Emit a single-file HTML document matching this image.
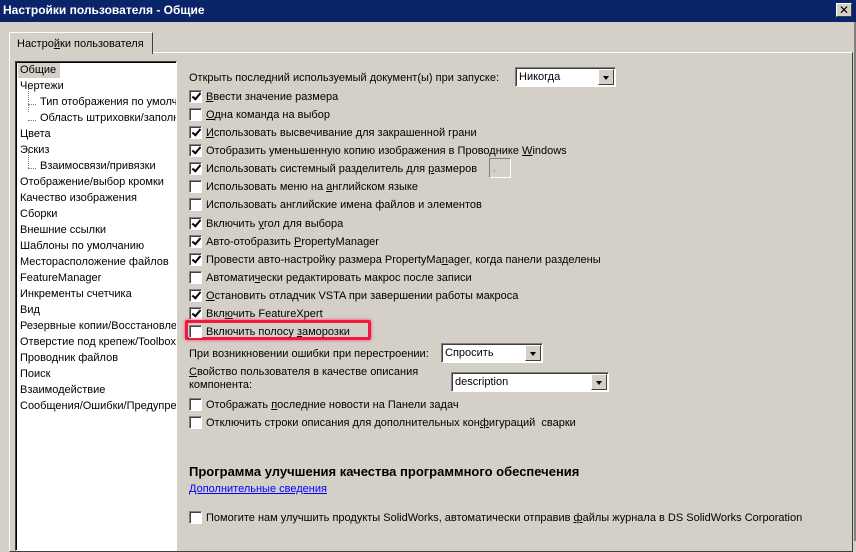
<!DOCTYPE html>
<html><head><meta charset="utf-8"><style>
*{margin:0;padding:0;box-sizing:border-box}
body{width:856px;height:541px;overflow:hidden;background:#d4d0c8;font-family:"Liberation Sans","DejaVu Sans",sans-serif;font-size:11px;color:#000;position:relative}
.a{position:absolute;white-space:nowrap}
.title{left:0;top:0;width:856px;height:22px;background:#0a246a;color:#fff;font-weight:bold;font-size:12px;padding:3px 0 0 3px}
.close{left:836px;top:3px;width:16px;height:14px;background:#d4d0c8;border:1px solid;border-color:#fff #404040 #404040 #fff;color:#000;font-size:12px;font-weight:bold;text-align:center;line-height:12px}
.tab{left:9px;top:32px;width:144px;height:22px;border:1px solid;border-color:#fff #404040 transparent #fff;border-bottom:none;background:#d4d0c8;padding:5px 0 0 7px;z-index:2}
.panel{left:9px;top:52px;width:844px;height:500px;border:1px solid;border-color:#fff #404040 #404040 #fff}
.list{left:15px;top:61px;width:162px;height:490px;background:#fff;border:1px solid;border-color:#404040 #fff #fff #404040;box-shadow:inset 1px 1px 0 #000}
.li{left:20px;margin-top:1px}
.cb{position:absolute;left:189px;width:13px;height:13px;background:#fff;border:1px solid;border-color:#808080 #fff #fff #808080;box-shadow:inset 1px 1px 0 #404040}
.cb.c::after{content:"";position:absolute;left:4px;top:0px;width:3px;height:7px;border:solid #000;border-width:0 2px 2px 0;transform:rotate(40deg)}
.t{left:206px;margin-top:2px}
.m{margin-top:2px}
.combo{position:absolute;background:#fff;border:1px solid;border-color:#808080 #fff #fff #808080;box-shadow:inset 1px 1px 0 #404040;padding:3px 0 0 3px;font-size:11px}
.combo i{position:absolute;right:1px;top:1px;bottom:1px;width:16px;background:#d4d0c8;border:1px solid;border-color:#fff #404040 #404040 #fff}
.combo i::after{content:"";position:absolute;left:4px;top:6px;border:3px solid transparent;border-top:4px solid #000;border-bottom:0}
u{text-decoration:underline}
</style></head><body>
<div class="a title">Настройки пользователя - Общие</div>
<div class="a close">✕</div>
<div class="a panel"></div>
<div class="a tab">Настро<u>й</u>ки пользователя</div>
<div class="a list"></div>
<div class="a" style="left:18px;top:63px;width:42px;height:15px;background:#d4d0c8"></div>
<div class="a li" style="top:63px">Общие</div>
<div class="a li" style="top:79px">Чертежи</div>
<div class="a" style="left:28px;top:88px;height:24px;border-left:1px dotted #808080"></div>
<div class="a" style="left:28px;top:104px;width:8px;border-top:1px dotted #808080"></div>
<div class="a" style="left:28px;top:120px;width:8px;border-top:1px dotted #808080"></div>
<div class="a li" style="left:40px;top:95px;width:136px;overflow:hidden">Тип отображения по умолчанию</div>
<div class="a li" style="left:40px;top:111px;width:136px;overflow:hidden">Область штриховки/заполнения</div>
<div class="a li" style="top:127px">Цвета</div>
<div class="a li" style="top:143px">Эскиз</div>
<div class="a" style="left:28px;top:152px;height:16px;border-left:1px dotted #808080"></div>
<div class="a" style="left:28px;top:168px;width:8px;border-top:1px dotted #808080"></div>
<div class="a li" style="left:40px;top:159px">Взаимосвязи/привязки</div>
<div class="a li" style="top:175px">Отображение/выбор кромки</div>
<div class="a li" style="top:191px">Качество изображения</div>
<div class="a li" style="top:207px">Сборки</div>
<div class="a li" style="top:223px">Внешние ссылки</div>
<div class="a li" style="top:239px">Шаблоны по умолчанию</div>
<div class="a li" style="top:255px">Месторасположение файлов</div>
<div class="a li" style="top:271px">FeatureManager</div>
<div class="a li" style="top:287px">Инкременты счетчика</div>
<div class="a li" style="top:303px">Вид</div>
<div class="a li" style="top:319px;width:156px;overflow:hidden">Резервные копии/Восстановление</div>
<div class="a li" style="top:335px;width:156px;overflow:hidden">Отверстие под крепеж/Toolbox</div>
<div class="a li" style="top:351px">Проводник файлов</div>
<div class="a li" style="top:367px">Поиск</div>
<div class="a li" style="top:383px">Взаимодействие</div>
<div class="a li" style="top:399px;width:156px;overflow:hidden">Сообщения/Ошибки/Предупреждения</div>

<div class="a m" style="left:189px;top:70px">Открыть последний используемый <u>д</u>окумент(ы) при запуске:</div>
<div class="combo" style="left:515px;top:67px;width:101px;height:20px">Никогда<i></i></div>

<div class="cb c" style="top:90px"></div><div class="a t" style="top:89px"><u>В</u>вести значение размера</div>
<div class="cb" style="top:108px"></div><div class="a t" style="top:107px"><u>О</u>дна команда на выбор</div>
<div class="cb c" style="top:126px"></div><div class="a t" style="top:125px"><u>И</u>спользовать высвечивание для закрашенной грани</div>
<div class="cb c" style="top:144px"></div><div class="a t" style="top:143px">Отобразить уменьшенную копию изображения в Проводнике <u>W</u>indows</div>
<div class="cb c" style="top:162px"></div><div class="a t" style="top:161px">Использовать системный разделитель для <u>р</u>азмеров</div>
<div class="a" style="left:489px;top:158px;width:22px;height:20px;border:1px solid;border-color:#808080 #fff #fff #808080;font-size:9px;padding:4px 0 0 3px;color:#808080">,</div>
<div class="cb" style="top:180px"></div><div class="a t" style="top:179px">Использовать меню на <u>а</u>нглийском языке</div>
<div class="cb" style="top:198px"></div><div class="a t" style="top:197px">Использовать английские имена файлов и элементов</div>
<div class="cb c" style="top:217px"></div><div class="a t" style="top:216px">Включить <u>у</u>гол для выбора</div>
<div class="cb c" style="top:235px"></div><div class="a t" style="top:234px">Авто-отобразить <u>P</u>ropertyManager</div>
<div class="cb c" style="top:253px"></div><div class="a t" style="top:252px">Провести авто-настройку размера PropertyMa<u>n</u>ager, когда панели разделены</div>
<div class="cb" style="top:271px"></div><div class="a t" style="top:270px">Автомати<u>ч</u>ески редактировать макрос после записи</div>
<div class="cb c" style="top:289px"></div><div class="a t" style="top:288px"><u>О</u>становить отладчик VSTA при завершении работы макроса</div>
<div class="cb c" style="top:307px"></div><div class="a t" style="top:306px">Вкл<u>ю</u>чить FeatureXpert</div>
<div class="a" style="left:185px;top:320px;width:186px;height:20px;border:3px solid #ee1c3c;border-radius:2px;box-shadow:0 0 3px #f37"></div>
<div class="cb" style="top:325px"></div><div class="a t" style="top:324px">Включить полосу <u>з</u>аморозки</div>
<div class="a m" style="left:189px;top:346px">При возникновении ошибки при перестроении:</div>
<div class="combo" style="left:441px;top:343px;width:102px;height:20px">Спросить<i></i></div>
<div class="a m" style="left:189px;top:364px;line-height:13px"><u>С</u>войство пользователя в качестве описания<br>компонента:</div>
<div class="combo" style="left:451px;top:372px;width:158px;height:20px">description<i></i></div>
<div class="cb" style="top:398px"></div><div class="a t" style="top:397px">Отображать <u>п</u>оследние новости на Панели задач</div>
<div class="cb" style="top:416px"></div><div class="a t" style="top:415px">Отключить строки описания для дополнительных кон<u>ф</u>игураций&nbsp; сварки</div>
<div class="a m" style="left:189px;top:462px;font-weight:bold;font-size:13px">Программа улучшения качества программного обеспечения</div>
<div class="a m" style="left:189px;top:481px;color:#00f;text-decoration:underline">Дополнительные сведения</div>
<div class="cb" style="top:511px"></div><div class="a t" style="top:510px">Помогите нам улучшить продукты SolidWorks, автоматически отправив <u>ф</u>айлы журнала в DS SolidWorks Corporation</div>
<div class="a" style="left:853px;top:22px;width:3px;height:519px;background:#808080;border-left:1px solid #d4d0c8"></div>
</body></html>
